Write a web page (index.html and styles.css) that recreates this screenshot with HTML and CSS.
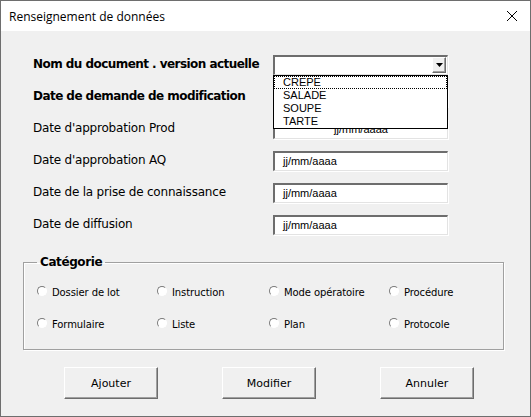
FILE: index.html
```html
<!DOCTYPE html>
<html lang="fr">
<head>
  <meta charset="UTF-8">
  <title>Renseignement de données</title>
  <link rel="stylesheet" href="styles.css">
</head>
<body>

  <div class="window">
    <!-- Title bar -->
    <div class="titlebar">
      <span class="title">Renseignement de données</span>
      <svg class="close" width="12" height="12" viewBox="0 0 12 12">
        <path d="M1 1 L11 11 M11 1 L1 11" stroke="#000" stroke-width="1" fill="none"/>
      </svg>
    </div>

    <div class="content">
      <!-- Fields -->
      <div class="fields">
        <div class="label bold">Nom du document . version actuelle</div>
        <div class="combo">
          <div class="combo-box">
            <span class="combo-btn">
              <svg width="7" height="4" viewBox="0 0 7 4"><path d="M0 0 H7 L3.5 4 Z" fill="#000"/></svg>
            </span>
          </div>
          <ul class="combo-list">
            <li class="focus">CREPE</li>
            <li>SALADE</li>
            <li>SOUPE</li>
            <li>TARTE</li>
          </ul>
        </div>

        <div class="label bold">Date de demande de modification</div>
        <div class="textbox"></div>

        <div class="label">Date d'approbation Prod</div>
        <div class="textbox center">jj/mm/aaaa</div>

        <div class="label">Date d'approbation AQ</div>
        <div class="textbox">jj/mm/aaaa</div>

        <div class="label">Date de la prise de connaissance</div>
        <div class="textbox">jj/mm/aaaa</div>

        <div class="label">Date de diffusion</div>
        <div class="textbox">jj/mm/aaaa</div>
      </div>

      <!-- Category frame -->
      <fieldset class="frame">
        <legend>Catégorie</legend>
        <div class="radios">
          <label class="radio"><span class="dot"></span>Dossier de lot</label>
          <label class="radio"><span class="dot"></span>Instruction</label>
          <label class="radio"><span class="dot"></span>Mode opératoire</label>
          <label class="radio"><span class="dot"></span>Procédure</label>
          <label class="radio"><span class="dot"></span>Formulaire</label>
          <label class="radio"><span class="dot"></span>Liste</label>
          <label class="radio"><span class="dot"></span>Plan</label>
          <label class="radio"><span class="dot"></span>Protocole</label>
        </div>
      </fieldset>

      <!-- Buttons -->
      <div class="buttons">
        <button class="btn">Ajouter</button>
        <button class="btn">Modifier</button>
        <button class="btn">Annuler</button>
      </div>
    </div>
  </div>

</body>
</html>
```

FILE: styles.css
```css
html, body {
  margin: 0;
  padding: 0;
}

body {
  font-family: "DejaVu Sans", sans-serif;
  background: #f0f0f0;
}

.window {
  width: 531px;
  height: 417px;
  box-sizing: border-box;
  border: 1px solid #6e6e6e;
  background: #f0f0f0;
}

.titlebar {
  height: 30px;
  background: white;
  display: flex;
  align-items: center;
  justify-content: space-between;
  padding: 0 12px 0 8px;
}

.title {
  font-family: "Open Sans", sans-serif;
  font-size: 12px;
  color: #000;
}

.content {
  padding-top: 18px;
}

.fields {
  display: grid;
  grid-template-columns: 240px 175px;
  grid-auto-rows: 32px;
  padding-left: 32px;
}

.label {
  font-size: 12px;
  color: #000;
  padding-top: 8px;
  letter-spacing: -0.2px;
}

.label.bold {
  font-weight: bold;
  letter-spacing: -0.55px;
}

.textbox, .combo-box {
  height: 20px;
  margin-top: 6px;
  box-sizing: border-box;
  background: white;
  border-top: 2px solid #6d6d6d;
  border-left: 2px solid #6d6d6d;
  border-right: 1px solid #e3e3e3;
  border-bottom: 1px solid #e3e3e3;
  box-shadow: 1px 1px 0 #ffffff;
  font-family: "Liberation Sans", sans-serif;
  font-size: 11px;
  padding-left: 8px;
  line-height: 17px;
}

.textbox.center {
  text-align: center;
  padding-left: 0;
}

.combo {
  position: relative;
}

.combo-box {
  display: flex;
  justify-content: flex-end;
  padding: 0 1px 0 0;
}

.combo-btn {
  width: 14px;
  height: 16px;
  background: #f0f0f0;
  border-right: 1px solid #6d6d6d;
  border-bottom: 1px solid #6d6d6d;
  border-top: 1px solid #fff;
  border-left: 1px solid #fff;
  box-shadow: inset -1px -1px 0 #a0a0a0;
  box-sizing: border-box;
  display: flex;
  align-items: center;
  justify-content: center;
}

.combo-list {
  position: absolute;
  top: 26px;
  left: 0;
  width: 175px;
  box-sizing: border-box;
  margin: 0;
  padding: 0;
  list-style: none;
  background: white;
  border: 1px solid #000;
  font-family: "Liberation Sans", sans-serif;
  font-size: 11px;
  z-index: 2;
}

.combo-list li {
  height: 13px;
  line-height: 13px;
  padding-left: 9px;
}

.combo-list li.focus {
  outline: 1px dotted #000;
  outline-offset: -1px;
}

.frame {
  margin: 14px 0 0 22px;
  width: 481px;
  height: 95px;
  box-sizing: border-box;
  border: 1px solid #a0a0a0;
  box-shadow: inset 1px 1px 0 #fff, 1px 1px 0 #fff;
  padding: 0 0 0 13px;
}

.frame legend {
  font-size: 12px;
  font-weight: bold;
  letter-spacing: -0.4px;
  padding: 0 3px;
  margin-left: 0;
}

.radios {
  display: grid;
  grid-template-columns: 120px 112px 120px 1fr;
  grid-auto-rows: 32px;
  margin-top: 13px;
}

.radio {
  display: flex;
  align-items: center;
  font-size: 10px;
  letter-spacing: -0.1px;
  height: 20px;
}

.dot {
  width: 10px;
  height: 10px;
  border-radius: 50%;
  box-sizing: border-box;
  border: 1px solid;
  border-color: #7a7a7a #fff #fff #7a7a7a;
  background: white;
  margin-right: 5px;
  margin-top: -2px;
}

.buttons {
  display: flex;
  gap: 64px;
  padding-left: 63px;
  margin-top: 17px;
}

.btn {
  width: 94px;
  height: 32px;
  background: #f0f0f0;
  border: 1px solid;
  border-color: #fff #6d6d6d #6d6d6d #fff;
  box-shadow: inset -1px -1px 0 #a0a0a0;
  font-family: "DejaVu Sans", sans-serif;
  font-size: 11px;
  color: #000;
  padding: 0;
}
```
